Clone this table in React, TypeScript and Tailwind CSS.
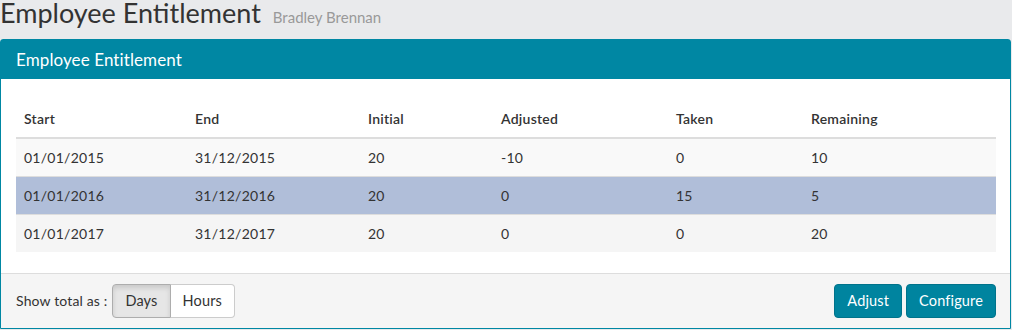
import React from "react";

interface Entitlement {
  start: string;
  end: string;
  initial: number;
  adjusted: number;
  taken: number;
  remaining: number;
}

const rows: Entitlement[] = [
  { start: "01/01/2015", end: "31/12/2015", initial: 20, adjusted: -10, taken: 0, remaining: 10 },
  { start: "01/01/2016", end: "31/12/2016", initial: 20, adjusted: 0, taken: 15, remaining: 5 },
  { start: "01/01/2017", end: "31/12/2017", initial: 20, adjusted: 0, taken: 0, remaining: 20 },
];

const rowBg = ["bg-[#f9f9f9]", "bg-[#b0bed9]", "bg-[#f5f5f5]"];

const cols = ["w-[171px]", "w-[173px]", "w-[133px]", "w-[175px]", "w-[135px]", ""];

const App: React.FC = () => {
  return (
    <div className="w-[1012px] h-[330px] bg-[#e9eaec] text-[#333] font-['Lato','Liberation_Sans',sans-serif] overflow-hidden">
      <div className="flex items-baseline h-[39px]">
        <h1 className="text-[27px] leading-[26px] font-normal">Employee Entitlement</h1>
        <span className="ml-[12px] text-[15px] text-[#999]">Bradley Brennan</span>
      </div>

      <div className="w-[1011px] border border-[#0087a3] rounded-t-[3px] bg-white">
        <div className="h-[39px] bg-[#0087a3] px-[15px] flex items-center text-white text-[17px] tracking-[0.1px]">
          Employee Entitlement
        </div>

        <div className="px-[15px] pt-[21px] pb-[21px]">
          <table className="w-[980px] border-collapse text-[14px] leading-[21px] tracking-[0.25px] table-fixed">
            <thead>
              <tr>
                {["Start", "End", "Initial", "Adjusted", "Taken", "Remaining"].map((h, i) => (
                  <th
                    key={h}
                    className={`${cols[i]} text-left font-semibold text-[#333] px-2 py-2 border-b-2 border-[#ddd]`}
                  >
                    {h}
                  </th>
                ))}
              </tr>
            </thead>
            <tbody>
              {rows.map((r, i) => (
                <tr key={r.start} className={`${rowBg[i]} border-t border-[#ddd]`}>
                  <td className="px-2 py-2">{r.start}</td>
                  <td className="px-2 py-2">{r.end}</td>
                  <td className="px-2 py-2">{r.initial}</td>
                  <td className="px-2 py-2">{r.adjusted}</td>
                  <td className="px-2 py-2">{r.taken}</td>
                  <td className="px-2 py-2">{r.remaining}</td>
                </tr>
              ))}
            </tbody>
          </table>
        </div>

        <div className="border-t border-[#ddd] bg-[#f5f5f5] h-[55px] pl-[15px] pr-[14px] flex items-center justify-between text-[14px] leading-[20px] tracking-[0.15px]">
          <div className="flex items-center">
            <span className="mr-[5px]">Show total as :</span>
            <div className="flex">
              <button className="px-3 py-[6px] border border-[#adadad] bg-[#e6e6e6] rounded-l-[4px] shadow-[inset_0_3px_5px_rgba(0,0,0,0.125)] text-[#333] text-[14.5px]">
                Days
              </button>
              <button className="px-3 py-[6px] border border-l-0 border-[#ccc] bg-white rounded-r-[4px] text-[#333] text-[14.5px]">
                Hours
              </button>
            </div>
          </div>
          <div className="flex gap-1">
            <button className="px-3 py-[6px] border border-[#00738b] bg-[#00849f] rounded-[4px] text-white text-[14.5px]">
              Adjust
            </button>
            <button className="px-3 py-[6px] border border-[#00738b] bg-[#00849f] rounded-[4px] text-white text-[14.5px]">
              Configure
            </button>
          </div>
        </div>
      </div>
    </div>
  );
};

export default App;
